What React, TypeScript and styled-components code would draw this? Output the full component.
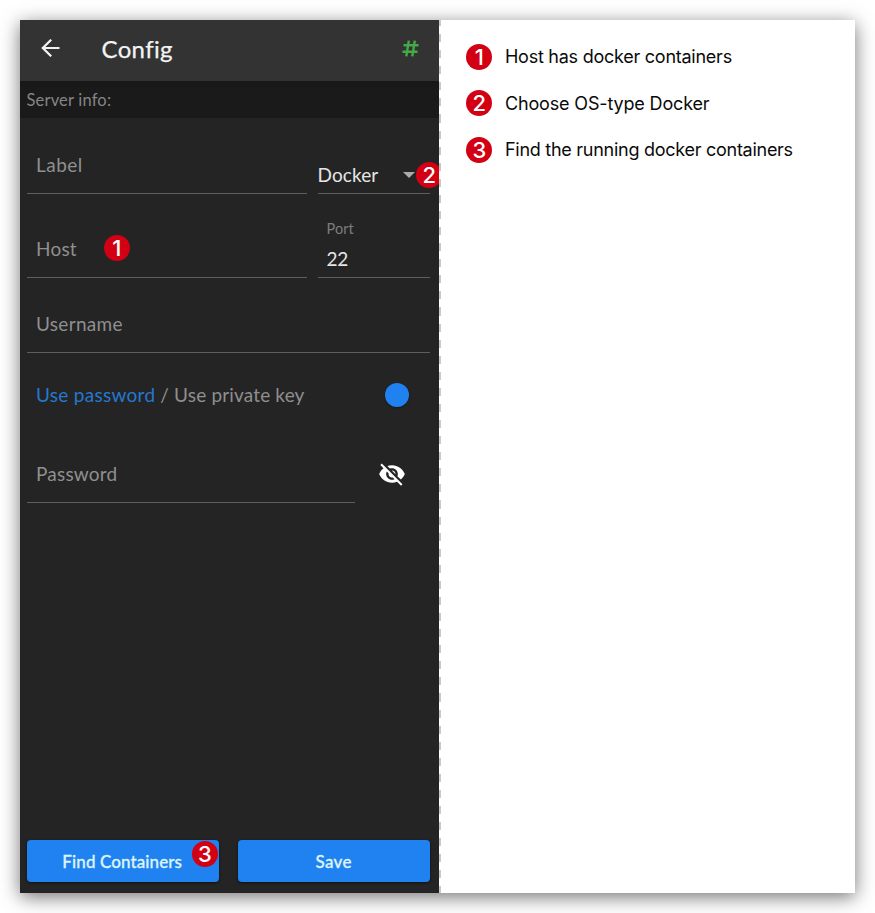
import React from "react";
import styled, { createGlobalStyle } from "styled-components";

const GlobalStyle = createGlobalStyle`
  *, *::before, *::after { box-sizing: border-box; }
  body { margin: 0; background: #fff; overflow: hidden; }
`;

const Stage = styled.div`
  width: 875px;
  height: 913px;
  padding: 20px 20px 20.5px;
`;

const Sheet = styled.main`
  display: flex;
  width: 834.6px;
  height: 872.5px;
  background: #fff;
  box-shadow: 0 4px 18px rgba(0, 0, 0, 0.55);
`;

const Phone = styled.section`
  display: flex;
  flex-direction: column;
  width: 419.3px;
  overflow: hidden;
  background: #242424;
  color: #8f8f8f;
  font-family: Lato, sans-serif;
`;

const TopBar = styled.header`
  display: flex;
  align-items: center;
  height: 61px;
  flex: none;
  padding: 0 20px 5px 20.5px;
  background: #333;
  color: #f3f3f3;
`;

const Title = styled.h1`
  flex: 1;
  margin: 2px 0 0 42px;
  font-size: 24px;
  line-height: 30px;
  font-weight: 400;
  letter-spacing: 0.35px;
  -webkit-text-stroke: 0.25px #f3f3f3;
`;

const SectionTitle = styled.div`
  height: 37px;
  flex: none;
  padding-left: 6.5px;
  background: linear-gradient(#171717, #1a1a1a 10px);
  font-size: 16.5px;
  line-height: 39px;
  color: #858585;
  letter-spacing: 0.18px;
`;

const Form = styled.form`
  display: flex;
  flex: 1;
  flex-direction: column;
  padding: 0 9px 10.5px 6.5px;
`;

const Row = styled.div<{ $height: number }>`
  display: flex;
  gap: 11px;
  height: ${(p) => p.$height}px;
`;

const Field = styled.div<{ $width?: number; $inset?: number; $drop?: number }>`
  display: flex;
  align-items: flex-end;
  flex: ${(p) => (p.$width ? `0 0 ${p.$width}px` : "1")};
  padding: 0 0 ${(p) => p.$drop ?? 16}px ${(p) => p.$inset ?? 9.5}px;
  border-bottom: 1px solid #5e5e5e;
`;

const Label = styled.span<{ $spacing: number }>`
  font-size: 19px;
  line-height: 24px;
  letter-spacing: ${(p) => p.$spacing}px;
  white-space: pre;
`;

const Value = styled(Label)`
  color: #e6e6e6;
`;

const PortValue = styled(Value)`
  padding-left: 9px;
`;

const Caret = styled.i`
  margin: 0 0 9px 24.5px;
  border: 6px solid transparent;
  border-top: 6px solid #aaa;
  border-bottom: 0;
`;

const PortStack = styled.div`
  display: flex;
  flex-direction: column;
  gap: 9px;
`;

const SmallLabel = styled.span`
  padding-left: 9px;
  font-size: 14.5px;
  line-height: 18px;
  color: #7d7d7d;
  letter-spacing: 0.1px;
`;

const AuthRow = styled.div`
  display: flex;
  align-items: center;
  justify-content: space-between;
  height: 84px;
  padding: 0 21.5px 0 9.5px;
`;

const Active = styled.span`
  color: #2478cf;
  letter-spacing: 0.28px;
`;

const Knob = styled.i`
  width: 24px;
  height: 24px;
  border-radius: 50%;
  background: #2082f0;
  box-shadow: 0 1px 2px rgba(0, 0, 0, 0.3);
`;

const EyeSlot = styled.div`
  display: flex;
  align-items: flex-end;
  width: 64px;
  padding: 0 0 14.5px 12px;
`;

const Actions = styled.footer`
  display: grid;
  grid-template-columns: 1fr 1fr;
  gap: 19px;
  margin-top: auto;
`;

const Button = styled.button<{ $spacing: number }>`
  position: relative;
  height: 42px;
  padding: 1px 1px 0 0;
  border: 0;
  border-radius: 4px;
  background: #2082f1;
  box-shadow: 0 1px 3px rgba(0, 0, 0, 0.6);
  color: #dcf4fb;
  font: 500 17px Lato, sans-serif;
  letter-spacing: ${(p) => p.$spacing}px;
  -webkit-text-stroke: 0.3px #dcf4fb;
`;

const Badge = styled.span`
  display: inline-flex;
  align-items: center;
  justify-content: center;
  flex: none;
  width: 26px;
  height: 26px;
  border-radius: 50%;
  background: #d20012;
  color: #fff;
  font: 500 22px/26px Inter, sans-serif;
  letter-spacing: 0;
  -webkit-text-stroke: 0;
`;

const HostBadge = styled(Badge)`
  margin: 0 0 0 27px;
`;

const MenuBadge = styled(Badge)`
  margin: 0 -12px -1.5px 1.5px;
`;

const CornerBadge = styled(Badge)`
  position: absolute;
  top: 1px;
  right: 1px;
`;

const Notes = styled.aside`
  flex: 1;
  border-left: 2px solid transparent;
  border-image: repeating-linear-gradient(#c9c9c9 0 8px, #fff 8px 16px) 2;
  border-width: 0 0 0 2px;
`;

const NoteList = styled.ol`
  display: flex;
  flex-direction: column;
  gap: 20.7px;
  margin: 0;
  padding: 23.5px 0 0 25.1px;
  list-style: none;
`;

const Note = styled.li<{ $spacing: number }>`
  display: flex;
  align-items: center;
  gap: 12.6px;
  height: 26px;
  color: #0a0a0a;
  font: 400 18px Inter, sans-serif;
  letter-spacing: ${(p) => p.$spacing}px;
`;

const BackIcon = () => (
  <svg width="19" height="18" viewBox="0 0 19 18" fill="none" stroke="currentColor" strokeWidth="2.2">
    <path d="M18.5 9H1.8M10.2 .7 1.8 9l8.4 8.3" />
  </svg>
);

const HashIcon = () => (
  <svg width="17" height="17" viewBox="0 0 17 17" fill="none" stroke="#45a946" strokeWidth="2.4">
    <path d="M1.5 5.3H16.5M.5 11.7h15M6.8.6 4.3 16.4M12.8.6l-2.5 15.8" />
  </svg>
);

const EyeOffIcon = () => (
  <svg width="28" height="28" viewBox="0 0 24 24" fill="#fff">
    <path d="M12 7c2.76 0 5 2.24 5 5 0 .65-.13 1.26-.36 1.83l2.92 2.92c1.51-1.26 2.7-2.89 3.43-4.75-1.73-4.39-6-7.5-11-7.5-1.4 0-2.74.25-3.98.7l2.16 2.16C10.74 7.13 11.35 7 12 7zM2 4.27l2.28 2.28.46.46C3.08 8.3 1.78 10.02 1 12c1.73 4.39 6 7.5 11 7.5 1.55 0 3.03-.3 4.38-.84l.42.42L19.73 22 21 20.73 3.27 3 2 4.27zM7.53 9.8l1.55 1.55c-.05.21-.08.43-.08.65 0 1.66 1.34 3 3 3 .22 0 .44-.03.65-.08l1.55 1.55c-.67.33-1.41.53-2.2.53-2.76 0-5-2.24-5-5 0-.79.2-1.53.53-2.2zm4.31-.78 3.15 3.15.02-.16c0-1.66-1.34-3-3-3l-.17.01z" />
  </svg>
);

const notes = [
  { text: "Host has docker containers", spacing: -0.25 },
  { text: "Choose OS-type Docker", spacing: -0.16 },
  { text: "Find the running docker containers", spacing: -0.27 },
];

export default function App() {
  return (
    <Stage>
      <GlobalStyle />
      <Sheet>
        <Phone>
          <TopBar>
            <BackIcon />
            <Title>Config</Title>
            <HashIcon />
          </TopBar>
          <SectionTitle>Server info:</SectionTitle>
          <Form>
            <Row $height={75.5}>
              <Field $width={280}>
                <Label $spacing={0.5}>Label</Label>
              </Field>
              <Field $inset={0} $drop={6}>
                <Value $spacing={0.1}>Docker</Value>
                <Caret />
                <MenuBadge>2</MenuBadge>
              </Field>
            </Row>
            <Row $height={84.5}>
              <Field $width={280}>
                <Label $spacing={0.2}>Host</Label>
                <HostBadge>1</HostBadge>
              </Field>
              <Field $inset={0} $drop={6}>
                <PortStack>
                  <SmallLabel>Port</SmallLabel>
                  <PortValue $spacing={-0.3}>22</PortValue>
                </PortStack>
              </Field>
            </Row>
            <Row $height={75}>
              <Field>
                <Label $spacing={0.3}>Username</Label>
              </Field>
            </Row>
            <AuthRow>
              <Label $spacing={0.16}>
                <Active>Use password</Active> / Use private key
              </Label>
              <Knob />
            </AuthRow>
            <Row $height={65.5}>
              <Field>
                <Label $spacing={0.2}>Password</Label>
              </Field>
              <EyeSlot>
                <EyeOffIcon />
              </EyeSlot>
            </Row>
            <Actions>
              <Button type="button" $spacing={0.1}>
                Find Containers
                <CornerBadge>3</CornerBadge>
              </Button>
              <Button type="button" $spacing={0.3}>Save</Button>
            </Actions>
          </Form>
        </Phone>
        <Notes>
          <NoteList>
            {notes.map((note, i) => (
              <Note key={note.text} $spacing={note.spacing}>
                <Badge>{i + 1}</Badge>
                {note.text}
              </Note>
            ))}
          </NoteList>
        </Notes>
      </Sheet>
    </Stage>
  );
}
